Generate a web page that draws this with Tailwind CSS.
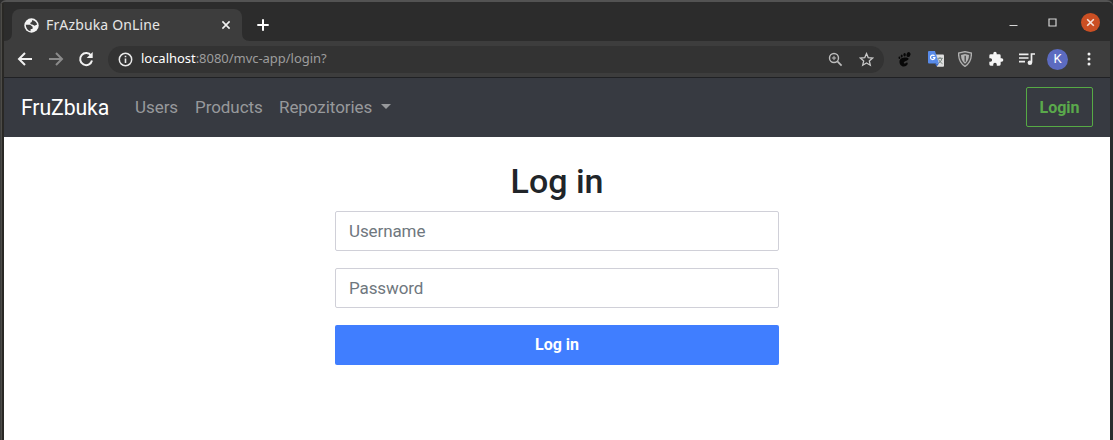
<!DOCTYPE html>
<html lang="en">
<head>
<meta charset="utf-8">
<title>FrAzbuka OnLine</title>
<script src="https://cdn.jsdelivr.net/npm/@tailwindcss/browser@4"></script>
</head>
<body class="flex h-[440px] w-[1113px] flex-col overflow-hidden rounded-t-md border-t-2 border-[#535353] bg-[#2c2c2c] font-['Roboto',sans-serif]">
<div class="flex min-h-0 flex-1">
  <div class="w-1 shrink-0 border-r-2 border-l border-r-[#292825] border-l-[#3c3c3b] bg-[#4d4c48]"></div>
  <div class="flex w-[1106px] shrink-0 flex-col">
    <!-- tab strip -->
    <header class="flex h-[39px] items-end bg-[#2c2c2c] font-['Noto_Sans',sans-serif]">
      <svg class="h-2 w-2" viewBox="0 0 8 8"><path d="M8 0v8H0Q8 8 8 0Z" fill="#3d3d3d"/></svg>
      <div class="flex h-8 w-[230px] items-center rounded-t-lg bg-[#3d3d3d] pl-3 pr-[9px]">
        <svg class="h-[15px] w-[15px] shrink-0" viewBox="0 0 16 16"><circle cx="8" cy="8" r="7.700" fill="#f3f3f3"/><path d="M1.900 7.300H6.500L9.200 9.300V11.500L7 12V14.200Q2.200 13 1.900 7.300ZM8.800 2Q13.200 3 14 7L11.200 8.300 9.500 7.200 7.200 6.700 6.500 5.200 8.200 4.200Z" fill="#3d3d3d"/></svg>
        <span class="ml-[7px] w-[174px] whitespace-nowrap text-[14px] leading-5 tracking-[0.15px] text-[#e6e6e6]">FrAzbuka OnLine</span>
        <svg class="h-3 w-3 shrink-0" viewBox="0 0 12 12"><path d="m2.400 2.400 7.200 7.200m0-7.200L2.400 9.600" stroke="#f1f1f1" stroke-width="1.600"/></svg>
      </div>
      <svg class="h-2 w-2" viewBox="0 0 8 8"><path d="M0 0v8h8Q0 8 0 0Z" fill="#3d3d3d"/></svg>
      <svg class="mb-[10px] ml-[7px] h-3 w-3" viewBox="0 0 12 12"><path d="M6 .3v11.4M.3 6h11.4" stroke="#fff" stroke-width="2"/></svg>
      <div class="ml-auto flex h-8 items-center pr-[10px] pb-[5px]">
        <svg class="mr-[30px] h-3 w-[9px]" viewBox="0 0 9 12"><path d="M.5 8.500h8" stroke="#d6d6d6" stroke-width="1"/></svg>
        <svg class="mr-[24px] h-[9px] w-[9px]" viewBox="0 0 9 9"><path d="M1 1h7v7H1Z" fill="none" stroke="#d6d6d6" stroke-width="1.200"/></svg>
        <svg class="h-[19px] w-[19px]" viewBox="0 0 19 19"><circle cx="9.500" cy="9.500" r="9.500" fill="#cb4f23"/><path d="m6.200 6.200 6.600 6.600m0-6.600-6.600 6.600" stroke="#f7e4dc" stroke-width="1.600"/></svg>
      </div>
    </header>
    <!-- toolbar -->
    <div class="flex h-[37px] items-center border-b border-[#202124] bg-[#3d3d3d] pl-[13px] font-['Noto_Sans',sans-serif]">
      <svg class="h-4 w-4" viewBox="0 0 16 16" fill="none" stroke="#f1f1f1" stroke-width="2"><path d="M15 8H2.500M8 2 2 8l6 6"/></svg>
      <svg class="ml-[15px] h-4 w-4" viewBox="0 0 16 16" fill="none" stroke="#8b8b8b" stroke-width="2"><path d="M1 8h12.500M8 2l6 6-6 6"/></svg>
      <svg class="ml-[14px] h-4 w-4" viewBox="0 0 16 16"><path d="M13.100 4.700A6 6 0 1 0 14 9.500" fill="none" stroke="#f1f1f1" stroke-width="2"/><path d="M14.700 1v6H8.700Z" fill="#f1f1f1"/></svg>
      <div class="ml-[14px] flex h-[27px] w-[776px] items-center rounded-full bg-[#333] pl-[10px] pr-[10px]">
        <svg class="h-[15px] w-[15px]" viewBox="0 0 15 15"><circle cx="7.500" cy="7.500" r="6.200" fill="none" stroke="#e8e8e8" stroke-width="1.500"/><path d="M7.500 6.500v4.500M7.500 3.700v1.600" stroke="#e8e8e8" stroke-width="1.600"/></svg>
        <span class="ml-2 -mt-0.5 whitespace-nowrap text-[13px] leading-5 tracking-[-0.03px] text-[#9d9d9d]"><span class="text-white">localhost</span>:8080/mvc-app/login?</span>
        <svg class="ml-auto h-[15px] w-[15px]" viewBox="0 0 15 15" fill="none" stroke="#bdbdbd"><circle cx="6" cy="6" r="4.500" stroke-width="1.400"/><path d="m9.400 9.400 4.200 4.200" stroke-width="1.700"/><path d="M6 3.900v4.200M3.900 6h4.200"/></svg>
        <svg class="ml-4 h-[15px] w-[15px]" viewBox="0 0 15 15"><path d="m7.500 1.600 1.700 4 4.400.4-3.300 2.900 1 4.300-3.800-2.300-3.800 2.300 1-4.300L1.400 6l4.400-.4Z" fill="none" stroke="#c6c6c6" stroke-width="1.300"/></svg>
      </div>
      <svg class="ml-[14px] h-[15px] w-[13px]" viewBox="0 0 13 15" fill="#080808"><path d="M10.500 6.500C9.500 4.700 2 5 1.500 9c-.4 3 1.700 5.500 4.200 5.500 2.200 0 4-1.400 4-3 0-1.400-1.300-1.200-1.900-.5-.8 1-2.300.5-2-.5.500-1.700 5.200-1.800 4.700-4Z"/><ellipse cx="10.500" cy="2.600" rx="1.900" ry="2.500" transform="rotate(20 10.500 2.600)"/><ellipse cx="6.600" cy="2.700" rx="1.200" ry="1.700"/><ellipse cx="3.700" cy="4" rx="1" ry="1.500"/><ellipse cx="1.400" cy="5.800" rx=".9" ry="1.300"/></svg>
      <svg class="ml-[17px] h-4 w-4" viewBox="0 0 16 16"><path d="M6 3.500h9q1 0 1 1V15q0 .7-1 .7H9Z" fill="#dedede"/><path d="M0 1q0-1 1-1h6l4 12.500H1q-1 0-1-1Z" fill="#588bea"/><path d="M7 12.500h4l-2.300 3Z" fill="#3968c9"/><path d="M6.500 5A2.200 2.200 0 1 0 6.900 6.700H4.900" fill="none" stroke="#fff" stroke-width="1.200"/><path d="M9.500 7.300h5.300M12 6v1.300m2 0q-.5 3-3.500 5M10.500 8.500q1.500 3 4 4.200" stroke="#77847f" fill="none"/></svg>
      <svg class="ml-[14px] h-4 w-[14px]" viewBox="0 0 14 16"><path d="M7 .6 13.400 2q.3 9-6.400 13.400Q.3 11 .6 2Z" fill="#4a4a4a" stroke="#b0b0b0" stroke-width="1.300"/><path d="m7 3 4 1q0 5.500-4 8.700Q3 9.500 3 4Z" fill="#b4b4b4"/><path d="M7.200 4.700v6" stroke="#444" stroke-width="1.300"/></svg>
      <svg class="ml-4 h-4 w-4" viewBox="0 0 24 24" fill="#f5f5f5"><path d="M20.500 11H19V7a2 2 0 0 0-2-2h-4V3.500a2.500 2.500 0 0 0-5 0V5H4a2 2 0 0 0-2 2v3.800h1.500a2.700 2.700 0 0 1 0 5.400H2V20a2 2 0 0 0 2 2h3.800v-1.500a2.700 2.700 0 0 1 5.400 0V22H17a2 2 0 0 0 2-2v-4h1.500a2.500 2.500 0 0 0 0-5Z"/></svg>
      <svg class="ml-[15px] h-[14px] w-4" viewBox="0 0 16 14"><path d="M0 2.300h9.500M0 6h9.500M0 9.700h6M12.500 10.500V2H16" fill="none" stroke="#efefef" stroke-width="1.700"/><circle cx="10.900" cy="10.700" r="2.300" fill="#efefef"/></svg>
      <span class="ml-3 flex h-[21px] w-[21px] items-center justify-center rounded-full bg-[#5c6bc0] font-['Roboto',sans-serif] text-[13px] text-white">K</span>
      <svg class="ml-[19px] h-[14px] w-1" viewBox="0 0 4 14" fill="#f1f1f1"><circle cx="2" cy="2" r="1.500"/><circle cx="2" cy="7" r="1.500"/><circle cx="2" cy="12" r="1.500"/></svg>
    </div>
    <!-- site navigation -->
    <nav class="flex h-[59px] items-center bg-[#373a41] px-[17px] text-[17px] text-[#97999c]">
      <a class="w-[114px] text-[21.250px] leading-8 tracking-[-0.12px] text-white">FruZbuka</a>
      <a class="w-[60px] tracking-[-0.05px]">Users</a>
      <a class="w-[84px] tracking-[-0.06px]">Products</a>
      <a class="w-[102px] tracking-[-0.06px]">Repozitories</a>
      <span class="mb-0.5 border-x-[5px] border-t-[5px] border-x-transparent border-t-[#97999c]"></span>
      <button class="mb-px ml-auto h-10 w-[67px] rounded-[2px] border border-[#56aa45] pt-0.5 text-[16px] font-bold text-[#5aa94b]">Login</button>
    </nav>
    <!-- login form -->
    <main class="flex flex-1 flex-col items-center bg-white pt-6">
      <h1 class="mb-[9px] text-[34px] leading-[41px] font-medium text-[#212529]">Log in</h1>
      <form class="flex w-[444px] flex-col gap-[17px] text-[17px]">
        <input class="h-10 rounded-[2px] border border-[#d0d0d8] px-[13px] tracking-[-0.1px] placeholder:text-[#6f777e]" placeholder="Username">
        <input class="h-10 rounded-[2px] border border-[#d0d0d8] px-[13px] tracking-[-0.1px] placeholder:text-[#6f777e]" type="password" placeholder="Password">
        <button type="button" class="h-10 rounded-[2px] bg-[#407eff] text-[16px] font-bold text-white">Log in</button>
      </form>
    </main>
  </div>
</div>
</body>
</html>
